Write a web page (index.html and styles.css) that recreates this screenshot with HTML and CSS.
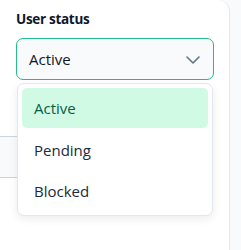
FILE: index.html
```html
<!DOCTYPE html>
<html>
<head>
<meta charset="utf-8">
<link rel="stylesheet" href="styles.css">
</head>
<body>
<div class="card">
  <div class="field">
    <div class="label">User status</div>
    <div class="select-wrap">
      <div class="select">
        <span class="value">Active</span>
        <svg class="chev" width="14" height="8" viewBox="0 0 14 8"><path d="M1 1 L7 7 L13 1" fill="none" stroke="#64748b" stroke-width="1.6" stroke-linecap="round" stroke-linejoin="round"/></svg>
      </div>
      <ul class="menu">
        <li class="item selected">Active</li>
        <li class="item">Pending</li>
        <li class="item">Blocked</li>
      </ul>
    </div>
  </div>
  <div class="row"></div>
</div>
</body>
</html>
```
FILE: styles.css
```css
html, body {
  margin: 0;
  padding: 0;
  background: #f8fafc;
  font-family: "Open Sans", "Noto Sans", sans-serif;
}
.card {
  width: 230px;
  height: 260px;
  background: #ffffff;
  border-right: 1px solid #e2e8f0;
  border-top-right-radius: 12px;
  box-sizing: border-box;
  padding-top: 9px;
}
.field {
  padding: 0 16px;
}
.label {
  font-size: 13.5px;
  letter-spacing: -0.3px;
  font-weight: 700;
  color: #0f172a;
  line-height: 20px;
  margin-bottom: 9px;
}
.select-wrap {
  position: relative;
  width: 198px;
}
.select {
  height: 42px;
  box-sizing: border-box;
  border: 1.5px solid #22bd88;
  border-radius: 7px;
  background: #f8fafc;
  display: flex;
  align-items: center;
  justify-content: space-between;
  padding: 0 13px 0 12px;
}
.value {
  font-size: 15px;
  color: #0f172a;
}
.chev {
  display: block;
  margin-top: 1px;
}
.menu {
  position: absolute;
  top: 45px;
  left: 1px;
  width: 196px;
  box-sizing: border-box;
  margin: 0;
  padding: 4px;
  list-style: none;
  background: #ffffff;
  border: 1px solid #e2e8f0;
  border-radius: 7px;
  box-shadow: 0 3px 8px rgba(15, 23, 42, 0.08);
  z-index: 2;
}
.item {
  height: 41px;
  display: flex;
  align-items: center;
  padding-left: 12px;
  font-size: 15px;
  color: #1e293b;
  border-radius: 5px;
}
.item.selected {
  background: #d1fae5;
  color: #065f46;
  height: 40px;
  margin-bottom: 1px;
}
.row {
  margin-top: 56px;
  width: 200px;
  height: 42px;
  box-sizing: border-box;
  background: #f8fafc;
  border-top: 1px solid #cbd5e1;
  border-bottom: 1px solid #cbd5e1;
}
```
